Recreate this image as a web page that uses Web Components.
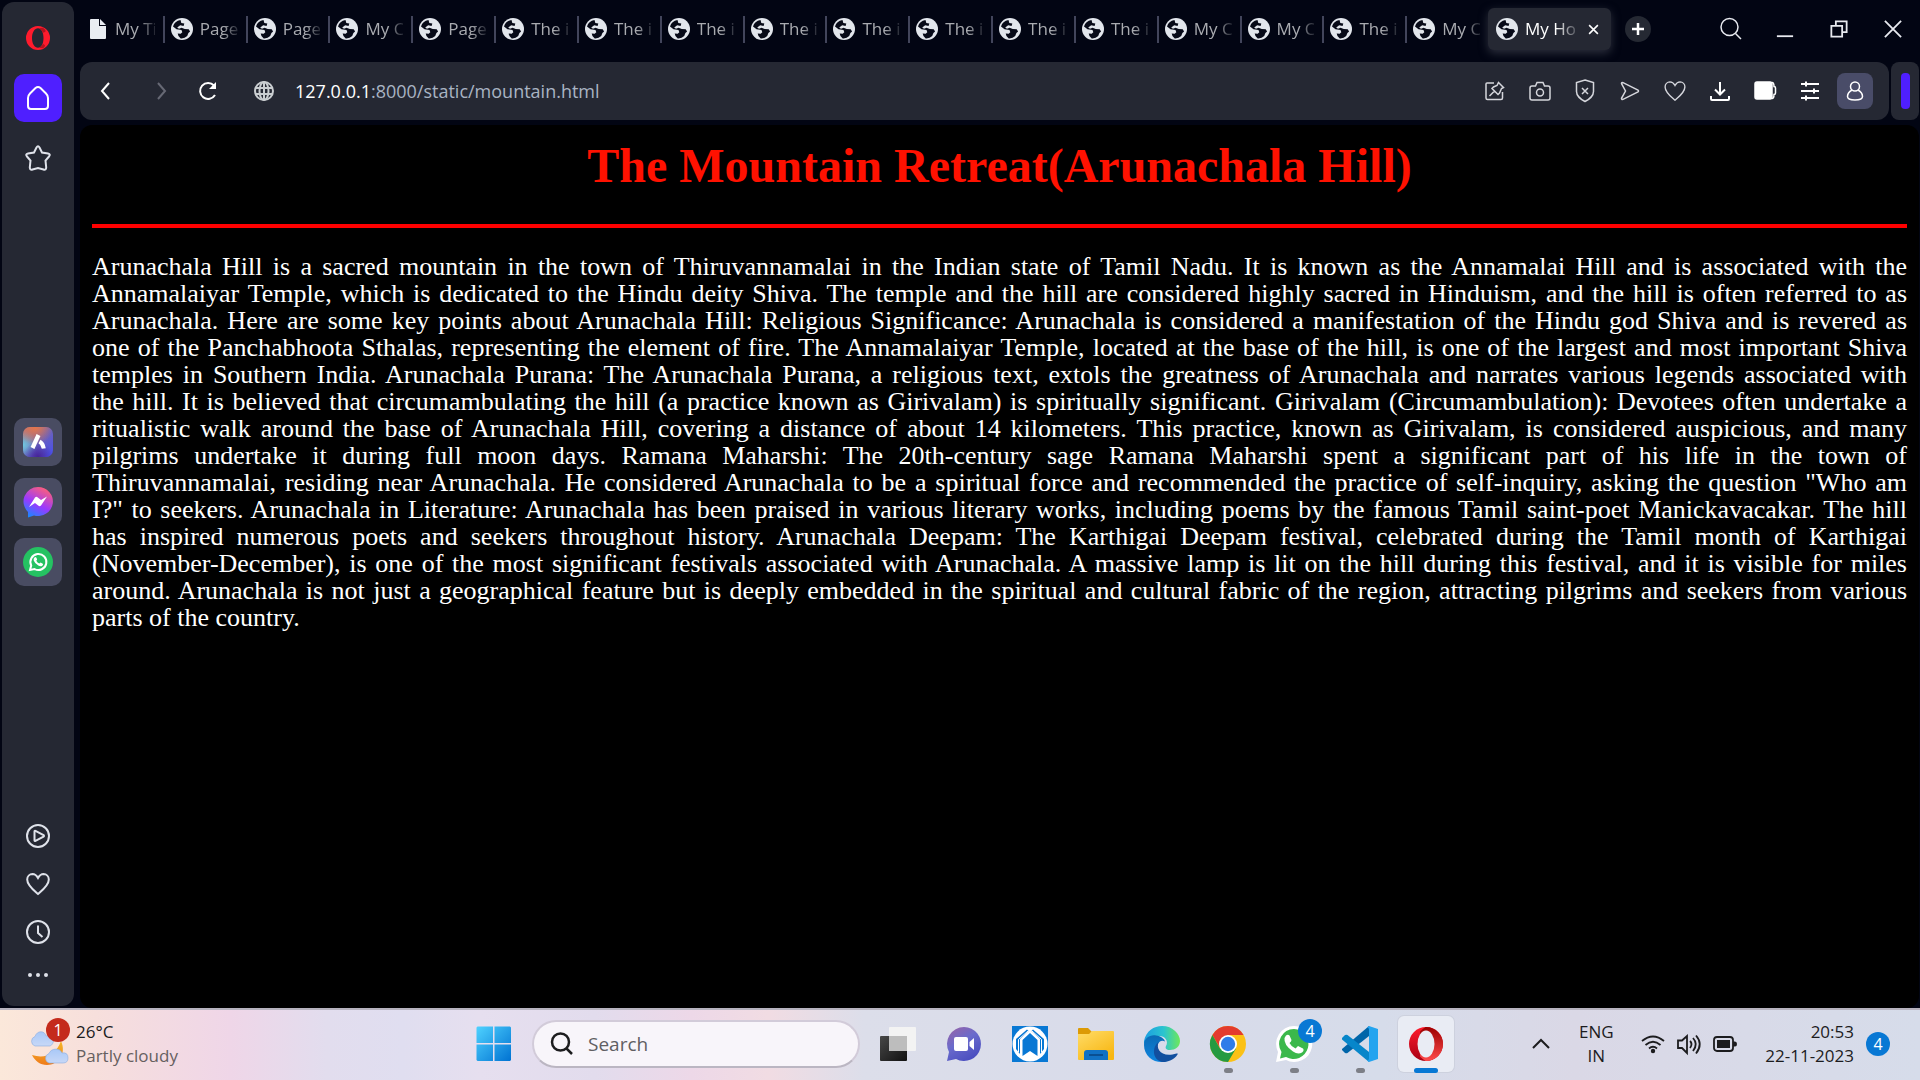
<!DOCTYPE html>
<html lang="en">
<head>
<meta charset="utf-8">
<title>My Holiday</title>
<style>
html, body { margin: 0; height: 100%; background: #020513; }
body { font-family: "Open Sans", "Noto Sans", sans-serif; overflow: hidden; }
</style>
</head>
<body>
<app-desktop></app-desktop>
<script>
const define = (name, css, html, setup) => {
  const t = document.createElement('template');
  t.innerHTML = `<style>*{box-sizing:border-box}button{font:inherit;color:inherit;background:none;border:0;padding:0;margin:0;display:grid;place-items:center}a{color:inherit;text-decoration:none}${css}</style>${html}`;
  customElements.define(name, class extends HTMLElement {
    constructor() {
      super();
      this.attachShadow({ mode: 'open' }).append(t.content.cloneNode(true));
    }
    connectedCallback() { if (setup) setup(this, this.shadowRoot); }
  });
};

const heart = '<path d="M12 22C8 18.500 1.200 13.500 1.200 7.500A5.500 5.500 0 0 1 6.500 2c3 0 4.300 1.800 5.500 4C13.200 3.800 14.500 2 17.500 2a5.500 5.500 0 0 1 5.300 5.500C22.800 13.500 16 18.500 12 22z"/>';
// Every drawing uses its own viewBox; line icons inherit the current colour.
const icons = {
  opera: [24, '<path fill="#ff1b2d" stroke="none" fill-rule="evenodd" d="M12 0a12 12 0 1 0 0 24a12 12 0 0 0 0-24zM12 2.200c3.300 0 5.500 4 5.500 9.800s-2.200 9.800-5.500 9.800S6 17.800 6 12s2.700-9.800 6-9.800z"/><path fill="#b5121e" stroke="none" d="M13 2.200l4-.500q3 2 2.500 4l-2.500 1q-1-3-4-4.500zM13 21.800l4 .500q2-1 2-3l-2-1.500q-1 3-4 4z"/>'],
  operabig: [36, '<defs><linearGradient id="a" x2="0" y2="1"><stop stop-color="#ff1b2d"/><stop offset="1" stop-color="#a70014"/></linearGradient><linearGradient id="b" x2="0" y2="1"><stop stop-color="#9c0000"/><stop offset="1" stop-color="#ff4b4b"/></linearGradient></defs><g stroke="none"><circle cx="18" cy="18" r="17" fill="url(#a)"/><path fill="url(#b)" d="M12 5.500C14 3.500 17 1 18 1c10 0 17 8 17 17s-7 17-17 17c-1 0-4-2.500-6-4.500z"/><ellipse cx="18" cy="18" rx="8.500" ry="13.500" fill="#e9ecf4"/></g>'],
  home: [24, '<path d="M2 12Q2 9.500 4 7.500L9.500 2Q12 0 14.500 2L20 7.500Q22 9.500 22 12v8q0 3-3 3H5q-3 0-3-3z"/>'],
  star: [26, '<path d="M11.500 2.500Q13 0 14.500 2.500L17 7.500L23 8.500Q26 9.200 24 11.500L20.500 15.500L21.200 22.500Q21 25.500 18.500 24.500L13 23L7.500 24.500Q5 25.500 4.800 22.500L5.500 15.500L2 11.500Q0 9.200 3 8.500L9 7.500z"/>'],
  play: [24, '<circle cx="12" cy="12" r="11"/><path d="M8.500 7.500q0-1 1-.600l8 4.200q1 .900 0 1.600l-8 4.200q-1 .500-1-.600z"/>'],
  heart: [24, heart],
  clock: [24, '<circle cx="12" cy="12" r="11"/><path d="M12 5.500v7.500l4.500 4"/>'],
  dots: [24, '<g fill="currentColor" stroke="none"><circle cx="4" cy="12" r="2"/><circle cx="12" cy="12" r="2"/><circle cx="20" cy="12" r="2"/></g>'],
  aria: [30, '<defs><linearGradient id="a" x2=".8" y2="1"><stop stop-color="#c47a70"/><stop offset=".5" stop-color="#6d63b8"/><stop offset="1" stop-color="#4b50e8"/></linearGradient><radialGradient id="b" cx="0" cy=".6" r=".5"><stop stop-color="#6fc8e0"/><stop offset="1" stop-color="#6fc8e0" stop-opacity="0"/></radialGradient><radialGradient id="c" cx=".4" cy="0" r=".6"><stop stop-color="#e5764a"/><stop offset="1" stop-color="#e5764a" stop-opacity="0"/></radialGradient><radialGradient id="d" cx=".5" cy="1" r=".5"><stop stop-color="#472394"/><stop offset="1" stop-color="#472394" stop-opacity="0"/></radialGradient></defs><g stroke="none"><rect width="30" height="30" rx="7" fill="url(#a)"/><rect width="30" height="30" rx="7" fill="url(#b)"/><rect width="30" height="30" rx="7" fill="url(#c)"/><rect width="30" height="30" rx="7" fill="url(#d)"/></g><path d="M15.500 8L9.500 21" stroke="#fff" stroke-width="4.200"/><path d="M16.500 14.500q3.500 2 4.300 7" stroke="#fff" stroke-width="4"/>'],
  messenger: [30, '<defs><linearGradient id="a" x1=".2" y1="1" x2=".7" y2="0"><stop stop-color="#168aff"/><stop offset=".45" stop-color="#9a39ff"/><stop offset="1" stop-color="#ff5f78"/></linearGradient></defs><g stroke="none"><path fill="url(#a)" d="M15 0a15 14.500 0 1 1-4 28.500L5 30.500V25A14.500 14.500 0 0 1 15 0z"/><path fill="#fff" d="M6 20l6-9.500q1.200-1.300 2.500-.300l3.500 2.800 6-3.500-6 9q-1.200 1.200-2.500.300L12 16z"/></g>'],
  whatsapp: [30, '<circle cx="15" cy="15" r="15" fill="#25c262" stroke="none"/><path d="M7 23l1.200-4.500A8 8 0 1 1 11.500 22z" stroke="#fff" stroke-width="2"/><path fill="#fff" stroke="none" d="M11.500 10.500q1-1 1.800 0l.8 1.800q0 .8-.8 1.500 1 2 3 2.800l1.300-1 2.200 1.200q.8 1-.5 2-1.500 1.200-4-.2-3.500-2-4.600-5-.4-2 .8-3.100z"/>'],
  file: [20, '<path fill="#e9edf2" stroke="none" d="M3 0h8v7h7v12q0 1-1 1H3q-1 0-1-1V1q0-1 1-1z"/><path fill="#e9edf2" stroke="none" d="M12 0l6 6h-6z"/>'],
  earth: [22, '<circle cx="11" cy="11" r="11" fill="#e2e6ec" stroke="none"/><path fill="#070a18" stroke="none" d="M9.500 2Q3.500 3 2 8.500l3.500 2.700 5 .8.800 2.200-1.600 1.500-3-.3q0 2.500 3 5 4 .300 6.500-2.400l1.200-3 1.700-1.500-1.400-2.200-4-.4-3.100-1.100-2.600 1-1.800-1.300 3-2.200 3.400.7.700-2.500-3-.6z"/>'],
  close: [24, '<path d="M5 5l14 14M19 5L5 19"/>'],
  plus: [26, '<circle cx="13" cy="13" r="13" fill="#252933" stroke="none"/><path d="M13 7v12M7 13h12" stroke="#fff" stroke-width="2.500"/>'],
  search: [24, '<circle cx="10.500" cy="10" r="8.500"/><path d="M16.500 16.500L22 22"/>'],
  min: [20, '<path d="M1 18h18"/>'],
  restore: [20, '<path d="M1.500 6.500h12v12h-12zM6.500 6V1.500h12v12H14"/>'],
  xwin: [20, '<path d="M1 1l18 18M19 1L1 19"/>'],
  back: [20, '<path d="M13 2L6 10l7 8"/>'],
  fwd: [20, '<path d="M7 2l7 8-7 8"/>'],
  reload: [20, '<path d="M17 14a8 8 0 1 1-1-9.500"/><path fill="currentColor" stroke="none" d="M18 1v7h-7z"/>'],
  globe: [20, '<circle cx="10" cy="10" r="9"/><ellipse cx="10" cy="10" rx="4.500" ry="9"/><path d="M1 7h18M1 13h18M10 1v18"/>'],
  pinbox: [20, '<path d="M9 2H2q-1 0-1 1v14q0 1.500 1.500 1.500H16q1.500 0 1.500-1.500v-6M13.500 1.500l5 5-2 1-2 4.500-1.500 1.500-6-6L8.500 6 12 4.500zM9.500 10L4.500 15"/>'],
  camera: [22, '<path d="M3 6h3.500l1.500-3.500h6L15.500 6H19q2 0 2 2v10q0 2-2 2H3q-2 0-2-2V8q0-2 2-2z"/><circle cx="11" cy="12.500" r="3.500"/>'],
  shield: [22, '<path d="M11 0l8.500 2.500v9c0 5-4 7.500-8.500 10-4.500-2.500-8.500-5-8.500-10v-9zM8 8l6 6M14 8l-6 6"/>'],
  send: [20, '<path d="M1.500 2.500q0-1.500 1.500-.800l15 7.500q1 .8 0 1.600l-15 7.500q-1.500.5-1.500-1L5.500 10z"/>'],
  download: [20, '<path d="M10 1v12M5 8.500l5 5 5-5M1 15v3q0 1 1 1h16q1 0 1-1v-3"/>'],
  batt: [22, '<rect x="1" y="2" width="17" height="17" rx="2" fill="#fff"/><path d="M18 2.500q2 0 2 4 1.500 0 1.500 1.500v5q0 1.500-1.500 1.500 0 4-2 4"/>'],
  sliders: [20, '<path d="M1 3h18M1 10h18M1 17h18M6 .500v5M14 7.500v5M6 14.500v5"/>'],
  person: [20, '<circle cx="10" cy="5.500" r="4.500"/><path d="M7 9q-4.500 2.500-4.500 6.500Q2.500 19 10 19t7.500-3.500Q17.500 11.500 13 9"/>'],
  weather: [42, '<defs><linearGradient id="a" x2="0" y2="1"><stop stop-color="#a9c8f7"/><stop offset="1" stop-color="#c7d8f7"/></linearGradient><linearGradient id="b" x2="0" y2="1"><stop stop-color="#f4b829"/><stop offset="1" stop-color="#ef7b1a"/></linearGradient></defs><g stroke="none"><path fill="url(#a)" stroke="#8cacdf" stroke-width=".600" d="M6 23a5 5 0 0 1 0-9.500C8 7 16 7.500 17 13a5 5 0 0 1 4 10z"/><path fill="url(#b)" d="M32 18c6 13-3 24-14 24-7 0-12-4-15-10 12 4 24 0 29-14z"/><path fill="url(#a)" stroke="#8cacdf" stroke-width=".600" d="M20 40a5 5 0 0 1 0-9.500C22 25 31 24.500 33 30q6-1 6 5 0 5-5 5z"/></g>'],
  win: [36, '<defs><linearGradient id="a" x2="1" y2="1"><stop stop-color="#4fd2ff"/><stop offset="1" stop-color="#0072d2"/></linearGradient></defs><path fill="url(#a)" stroke="none" d="M1.500.500h15.500v16.500H.500V1.500zM18.500.500h15.500l1 1V17H18.500zM.500 18.500H17V35H1.500l-1-1zM18.500 18.500H35V34l-1 1H18.500z"/>'],
  taskview: [36, '<defs><linearGradient id="a" x2="1" y2="1"><stop stop-color="#484848"/><stop offset="1" stop-color="#111"/></linearGradient></defs><g stroke="none"><rect y="10" width="27" height="25" rx="1" fill="url(#a)"/><rect x="9" y="1" width="27" height="24" rx="1" fill="#f3f3f3"/><path fill="#bdbdbd" d="M9 10h18v15H9z"/></g>'],
  chat: [36, '<defs><linearGradient id="a" x2=".6" y2="1"><stop stop-color="#9b62a3"/><stop offset=".5" stop-color="#6a6bcc"/><stop offset="1" stop-color="#4b4fc0"/></linearGradient></defs><g stroke="none"><path fill="url(#a)" d="M18 1a17 17 0 1 1-8 32L1 35l2-9A17 17 0 0 1 18 1z"/><rect x="8" y="11" width="14" height="14" rx="2" fill="#fff"/><path fill="#fff" d="M23.500 16l4.500-4v12l-4.500-4z"/></g>'],
  bluebook: [36, '<g stroke="none"><path fill="#0878d4" d="M0 0h36v36H0z"/><circle cx="18" cy="18" r="17.500" fill="#fff"/><path fill="#0878d4" d="M10.500 14L18 7l7.500 7v16L18 25l-7.500 5zM4 13L15 3.500l1.500 1.500-8.500 8v15l-4-5zM32 13L21 3.500 19.500 5l8.500 8v15l4-5z"/></g><path d="M6.500 26V13.500L16 5M29.500 26V13.500L20 5" stroke="#fff" stroke-width="1"/>'],
  folder: [36, '<defs><linearGradient id="a" x2=".7" y2="1"><stop stop-color="#ffdc68"/><stop offset="1" stop-color="#f8b713"/></linearGradient></defs><g stroke="none"><path fill="#dc9a05" d="M0 3q0-1 1-1h9l4 4v6H0z"/><path fill="url(#a)" d="M0 8h11l3-3h21q1 0 1 1v27q0 1-1 1H1q-1 0-1-1z"/><path fill="#1171c4" d="M6 34v-7q0-3 3-3h18q3 0 3 3v7z"/><path fill="#0a4f92" d="M11 28h14v2H11z"/></g>'],
  edge: [36, '<defs><linearGradient id="a" x2="1"><stop stop-color="#1b9de2"/><stop offset=".55" stop-color="#2bc4cf"/><stop offset="1" stop-color="#6ee85a"/></linearGradient><linearGradient id="b" x2="0" y2="1"><stop stop-color="#0b6ab5"/><stop offset="1" stop-color="#0f86e0"/></linearGradient></defs><g stroke="none"><path fill="url(#a)" d="M0 15C2 5 10 0 18 0c11 0 18 8 18 15 0 6-5 9-10 9-4 0-5-2-4-4 3-5-1-10-7-10C8 10 2 13 0 19z"/><path fill="url(#b)" d="M0 19C0 12 6 8.500 12 9.500c5 .5 8.500 3.500 9 6-5-3-9 3-7 9 2 5 6 8 10 10.500-11 4-24-3-24-16z"/><path fill="#124f9f" d="M14.500 16c-3 7 3 16 18 11.500q2-.5 1 1C30 34 24 36 19 36 9 35 7 22 14.500 16z"/></g>'],
  chrome: [36, '<g stroke="none"><circle cx="18" cy="18" r="18" fill="#fbc116"/><path fill="#e33b2e" d="M2.400 9A18 18 0 0 1 33.600 9H18L10 22z"/><path fill="#259a41" d="M2.400 9A18 18 0 0 0 18 36l8-13.500H10z"/><circle cx="18" cy="18" r="9" fill="#fff"/><circle cx="18" cy="18" r="7.200" fill="#2e7ce9"/></g>'],
  wabig: [36, '<g stroke="none"><path fill="#fff" d="M18 0a18 18 0 1 1-8 34L0 36l2-10A18 18 0 0 1 18 0z"/><path fill="#3bb84b" d="M18 3a15 15 0 1 1-8 28l-6 1.500L5.500 26A15 15 0 0 1 18 3z"/><path fill="#fff" d="M10 9.500q2-1.500 3.500 0l2 4.500q0 1.500-2 3 2 4 6 5.500l2.500-2.500 5 2.500q1.500 2-1 4-4 2.500-9-1Q7.500 19 8.500 12z"/></g>'],
  code: [36, '<g stroke="none"><path fill="#0065a9" d="M0 24l3 3q1.500.5 2.500 0L27 10V0L0 23z"/><path fill="#0786ca" d="M0 12l3-3q1.500-.5 2.500 0L27 26v10L0 13.500z"/><path fill="#24a4ef" d="M27 0l9 3v30l-9 3-2-1.500q2 0 2-2V3.500q0-2-2-2z"/></g>'],
  up: [20, '<path d="M2 14l8-8 8 8"/>'],
  wifi: [24, '<path d="M1 9q11-9 22 0M4.500 13q7.500-6.500 15 0M8 16.500q4-3.500 8 0"/><circle cx="12" cy="19" r="2.200" fill="currentColor" stroke="none"/>'],
  sound: [24, '<path d="M1 8.500h4L10 4v17l-5-5H1zM13 9q3 3 0 7M16 6q5.500 6 0 13M19 3.500q7.500 8.500 0 18"/>'],
  power: [24, '<rect x="1" y="5" width="19" height="14" rx="3"/><path fill="currentColor" stroke="none" d="M4 8h13v8H4zM20 9.500h2q2 0 2 2.500t-2 2.500h-2z"/>']
};
customElements.define('line-icon', class extends HTMLElement {
  connectedCallback() {
    if (this.shadowRoot) return;
    const [box, body] = icons[this.getAttribute('name')];
    const size = this.getAttribute('size') || box;
    this.attachShadow({ mode: 'open' }).innerHTML =
      `<style>:host{display:block;width:${size}px;height:${size}px;flex:none}svg{display:block;width:100%;height:100%;overflow:visible}</style>
      <svg viewBox="0 0 ${box} ${box}" fill="none" stroke="currentColor" stroke-width="${this.getAttribute('weight') || 1.5}" aria-hidden="true">${body}</svg>`;
  }
});

define('side-rail', `
:host{display:flex;flex-direction:column;justify-content:space-between;width:72px;border-radius:12px;background:#252833;color:#dfe2ea}
div{display:flex;flex-direction:column;align-items:center}
button{width:48px;height:48px;border-radius:10px}
.top{padding-top:12px;gap:12px}.home{background:#4f1fff;color:#fff}
.apps{gap:12px;padding-top:10px}.apps button{background:#494c62}
.tools{padding-bottom:12px}.tools .more{height:38px}`, `
<div class="top"><button aria-label="Opera menu"><line-icon name="opera"></line-icon></button><button class="home" aria-label="Home"><line-icon name="home" weight="2"></line-icon></button><button aria-label="Bookmarks"><line-icon name="star" weight="2"></line-icon></button></div>
<div class="apps"><button aria-label="Aria"><line-icon name="aria"></line-icon></button><button aria-label="Messenger"><line-icon name="messenger"></line-icon></button><button aria-label="WhatsApp"><line-icon name="whatsapp"></line-icon></button></div>
<div class="tools"><button aria-label="Player"><line-icon name="play" weight="2"></line-icon></button><button aria-label="Pinboards"><line-icon name="heart" weight="2"></line-icon></button><button aria-label="History"><line-icon name="clock" weight="2"></line-icon></button><button class="more" aria-label="More"><line-icon name="dots"></line-icon></button></div>`);

define('page-tab', `
:host{display:flex;flex:1 1 0;min-width:0;align-items:center;gap:7px;height:42px;padding:0 8px;color:#a9abb0;font-size:17px;line-height:24px}
:host([divided]){background:linear-gradient(#42455b,#42455b) 0 50%/2px 27px no-repeat}
a{flex:1;min-width:0;overflow:hidden;white-space:nowrap;-webkit-mask-image:linear-gradient(90deg,#000 60%,#0003);mask-image:linear-gradient(90deg,#000 60%,#0003)}
button{display:none}
:host([active]){flex:0 0 123px;background:#252833;border-radius:6px;color:#fff;box-shadow:0 3px 10px #4a4c5a99}
:host([active]) button{display:grid;width:20px;height:24px}`, `
<slot name="icon"></slot><a href="#"><slot></slot></a><button aria-label="Close tab"><line-icon name="close" size="15" weight="2.5"></line-icon></button>`);

const titles = ['My Ti', 'Page', 'Page', 'My C', 'Page', ...Array(8).fill('The i'), 'My C', 'My C', 'The i', 'My C'];
define('tab-strip', `
:host{display:flex;align-items:center;height:62px;padding-bottom:4px;color:#e8eaf0}
nav{display:flex;flex:1;min-width:0}
.add{width:54px}.win{width:54px;height:40px}.find{margin-left:39px}`, `
<nav>${titles.map((t, i) => `<page-tab ${i ? 'divided' : ''}><line-icon slot="icon" name="${i ? 'earth' : 'file'}" size="${i ? 22 : 20}"></line-icon>${t}</page-tab>`).join('')}<page-tab active><line-icon slot="icon" name="earth"></line-icon>My Ho</page-tab></nav>
<button class="add" aria-label="New tab"><line-icon name="plus"></line-icon></button>
<button class="win find" aria-label="Search tabs"><line-icon name="search"></line-icon></button>
<button class="win" aria-label="Minimise"><line-icon name="min" size="18" weight="2"></line-icon></button>
<button class="win" aria-label="Restore"><line-icon name="restore" size="18" weight="2"></line-icon></button>
<button class="win" aria-label="Close"><line-icon name="xwin" size="18" weight="2"></line-icon></button>`);

define('address-bar', `
:host{display:flex;gap:2px;height:58px;color:#fff}
.bar{display:flex;flex:1;min-width:0;align-items:center;background:#252833;border-radius:12px;padding-right:16px}
.nav{width:51px;height:40px}.off{color:#676975;padding-left:8px}
.site{width:62px;color:#c9cdd0}
.url{flex:1;min-width:0;font-size:18px;line-height:24px;white-space:nowrap;overflow:hidden;color:#a9b4c3}.url b{font-weight:400;color:#fff}
.tool{width:45px;height:36px;color:#d5d6dc}.white{color:#fff}
.me{width:36px;background:#494c68;border-radius:8px;color:#fff;margin-left:5px}
.extra{width:28px;background:#252833;border-radius:8px;display:grid;place-items:center}.extra i{width:9px;height:36px;border-radius:4px;background:#4f1fff}`, `
<div class="bar">
<button class="nav" aria-label="Back"><line-icon name="back" weight="2"></line-icon></button><button class="nav off" aria-label="Forward"><line-icon name="fwd" weight="2"></line-icon></button><button class="nav" aria-label="Reload"><line-icon name="reload" weight="2"></line-icon></button>
<button class="site" aria-label="Site information"><line-icon name="globe" weight="2"></line-icon></button>
<a class="url" href="#"><b>127.0.0.1</b>:8000/static/mountain.html</a>
<button class="tool" aria-label="Edit page"><line-icon name="pinbox"></line-icon></button><button class="tool" aria-label="Snapshot"><line-icon name="camera"></line-icon></button><button class="tool" aria-label="Ad blocker"><line-icon name="shield"></line-icon></button><button class="tool" aria-label="Flow"><line-icon name="send"></line-icon></button><button class="tool" aria-label="Pinboards"><line-icon name="heart" size="22"></line-icon></button><button class="tool white" aria-label="Downloads"><line-icon name="download" weight="2"></line-icon></button><button class="tool white" aria-label="Battery saver"><line-icon name="batt"></line-icon></button><button class="tool white" aria-label="Easy setup"><line-icon name="sliders" weight="2"></line-icon></button><button class="tool me" aria-label="Profile"><line-icon name="person"></line-icon></button>
</div><div class="extra"><i></i></div>`);

const lines = [
'Arunachala Hill is a sacred mountain in the town of Thiruvannamalai in the Indian state of Tamil Nadu. It is known as the Annamalai Hill and is associated with the',
'Annamalaiyar Temple, which is dedicated to the Hindu deity Shiva. The temple and the hill are considered highly sacred in Hinduism, and the hill is often referred to as',
'Arunachala. Here are some key points about Arunachala Hill: Religious Significance: Arunachala is considered a manifestation of the Hindu god Shiva and is revered as',
'one of the Panchabhoota Sthalas, representing the element of fire. The Annamalaiyar Temple, located at the base of the hill, is one of the largest and most important Shiva',
'temples in Southern India. Arunachala Purana: The Arunachala Purana, a religious text, extols the greatness of Arunachala and narrates various legends associated with',
'the hill. It is believed that circumambulating the hill (a practice known as Girivalam) is spiritually significant. Girivalam (Circumambulation): Devotees often undertake a',
'ritualistic walk around the base of Arunachala Hill, covering a distance of about 14 kilometers. This practice, known as Girivalam, is considered auspicious, and many',
'pilgrims undertake it during full moon days. Ramana Maharshi: The 20th-century sage Ramana Maharshi spent a significant part of his life in the town of',
'Thiruvannamalai, residing near Arunachala. He considered Arunachala to be a spiritual force and recommended the practice of self-inquiry, asking the question "Who am',
'I?" to seekers. Arunachala in Literature: Arunachala has been praised in various literary works, including poems by the famous Tamil saint-poet Manickavacakar. The hill',
'has inspired numerous poets and seekers throughout history. Arunachala Deepam: The Karthigai Deepam festival, celebrated during the Tamil month of Karthigai',
'(November-December), is one of the most significant festivals associated with Arunachala. A massive lamp is lit on the hill during this festival, and it is visible for miles',
'around. Arunachala is not just a geographical feature but is deeply embedded in the spiritual and cultural fabric of the region, attracting pilgrims and seekers from various',
'parts of the country.'];
define('retreat-page', `
:host{display:block;background:#000;border-radius:12px;padding:12px;color:#fff;font-family:Georgia,"Liberation Serif",serif;overflow:hidden}
h1{margin:0;color:#ff1100;font:bold 48px/58px "Liberation Serif",serif;text-align:center}
hr{margin:29px 0 25px;border:0;height:4px;background:#f00}
p{margin:0;font-size:26px;line-height:27px}
span{display:block;text-align:justify;text-align-last:justify}
span:last-child{text-align-last:left}`, `
<h1>The Mountain Retreat(Arunachala Hill)</h1><hr><p>${lines.map(l => `<span>${l} </span>`).join('')}</p>`);

define('dock-app', `
:host{display:block;position:relative}
button{width:56px;height:56px;border-radius:6px}
:host([active]) button{background:#e9ecf4;box-shadow:0 0 0 1px #cdd1de}
:host([running])::after{content:"";position:absolute;left:24px;bottom:-1px;width:9px;height:5px;border-radius:3px;background:#7d7f87}
:host([active])::after{content:"";position:absolute;left:16px;bottom:-1px;width:24px;height:5px;border-radius:3px;background:#0878d4}
::slotted(b){position:absolute;right:0;top:3px;width:24px;height:24px;border-radius:50%;background:#0878d4;color:#fff;font-weight:400;font-size:16px;line-height:24px;text-align:center}`, `
<button><slot name="icon"></slot></button><slot></slot>`,
(host, root) => root.querySelector('button').setAttribute('aria-label', host.getAttribute('label')));

const dock = [['taskview','Task view'],['chat','Chat'],['bluebook','Reader'],['folder','File Explorer'],['edge','Edge'],['chrome','Chrome','running'],['wabig','WhatsApp','running'],['code','Visual Studio Code','running'],['operabig','Opera','active']];
define('task-bar', `
:host{display:grid;box-sizing:border-box;grid-template-columns:1fr auto 1fr;align-items:center;height:72px;padding-bottom:2px;border-top:2px solid #b7b3bf;color:#1c1c1e;font-size:17px;line-height:24px;
background:linear-gradient(90deg,#fbe8da 0,#f7dfdc 5%,#efd6e8 12%,#e2ddee 17%,#e0def0 21%,#e6dfef 25%,#e2dced 31%,#edd8e8 36%,#f1dce3 40%,#dcdeea 45%,#d8dbea 60%,#d6dcea 72%,#dad8e6 82%,#d6dcea 100%)}
.weather{display:grid;grid-template-columns:42px auto;column-gap:5px;justify-content:start;justify-items:start;text-align:left;padding-left:29px;position:relative}
.weather line-icon{grid-row:span 2}.weather span+span{color:#66605f}
.weather b{position:absolute;left:46px;top:-2px;width:24px;height:24px;border-radius:50%;background:#c42b1c;color:#fff;font-weight:400;font-size:16px;line-height:24px;text-align:center}
.mid{display:flex;align-items:center;gap:10px}
.search{display:flex;align-items:center;gap:14px;width:328px;height:48px;padding:0 16px;border-radius:24px;background:#f8f5fa;border:2px solid #d2cbd9;border-bottom-color:#bbb6c2}
input{flex:1;min-width:0;border:0;background:none;font:19px/24px "Open Sans",sans-serif;padding:0;outline:0}input::placeholder{color:#605e62;opacity:1}
.tray{display:flex;justify-content:flex-end;align-items:center;padding-right:30px}
.lang{width:66px;margin:0 12px}
.status{display:flex;gap:12px}
.time{margin:0 12px 0 28px;justify-items:end}
.count{width:24px;height:24px;border-radius:50%;background:#0878d4;color:#fff;font-size:16px;line-height:24px}`, `
<button class="weather" aria-label="Weather"><line-icon name="weather"></line-icon><span>26°C</span><span>Partly cloudy</span><b>1</b></button>
<div class="mid"><dock-app label="Start"><line-icon slot="icon" name="win"></line-icon></dock-app>
<label class="search"><line-icon name="search" weight="2.5"></line-icon><input type="text" placeholder="Search" aria-label="Search"></label>
${dock.map(([n, l, s = '']) => `<dock-app label="${l}" ${s}><line-icon slot="icon" name="${n}"></line-icon>${n === 'wabig' ? '<b>4</b>' : ''}</dock-app>`).join('')}</div>
<div class="tray"><button aria-label="Hidden icons"><line-icon name="up" weight="2"></line-icon></button><button class="lang"><span>ENG</span><span>IN</span></button>
<button aria-label="Quick settings"><span class="status"><line-icon name="wifi" weight="1.8"></line-icon><line-icon name="sound" weight="1.8"></line-icon><line-icon name="power" weight="1.8"></line-icon></span></button>
<button class="time"><span>20:53</span><span>22-11-2023</span></button><button class="count">4</button></div>`);

define('app-desktop', `
:host{display:grid;grid-template-columns:minmax(0,1fr);grid-template-rows:1fr auto;height:100vh;min-height:700px}
.browser{display:grid;grid-template-columns:auto minmax(0,1fr);gap:6px;padding:2px 0 0 2px;min-height:0}
side-rail{margin-bottom:2px}
main{display:grid;grid-template-columns:minmax(0,1fr);grid-template-rows:auto auto 1fr;min-width:0;margin-top:-2px}
address-bar{margin-right:1px}
retreat-page{margin:5px 1px 0 0}`, `
<div class="browser"><side-rail></side-rail><main><tab-strip></tab-strip><address-bar></address-bar><retreat-page></retreat-page></main></div><task-bar></task-bar>`);
</script>
</body>
</html>
